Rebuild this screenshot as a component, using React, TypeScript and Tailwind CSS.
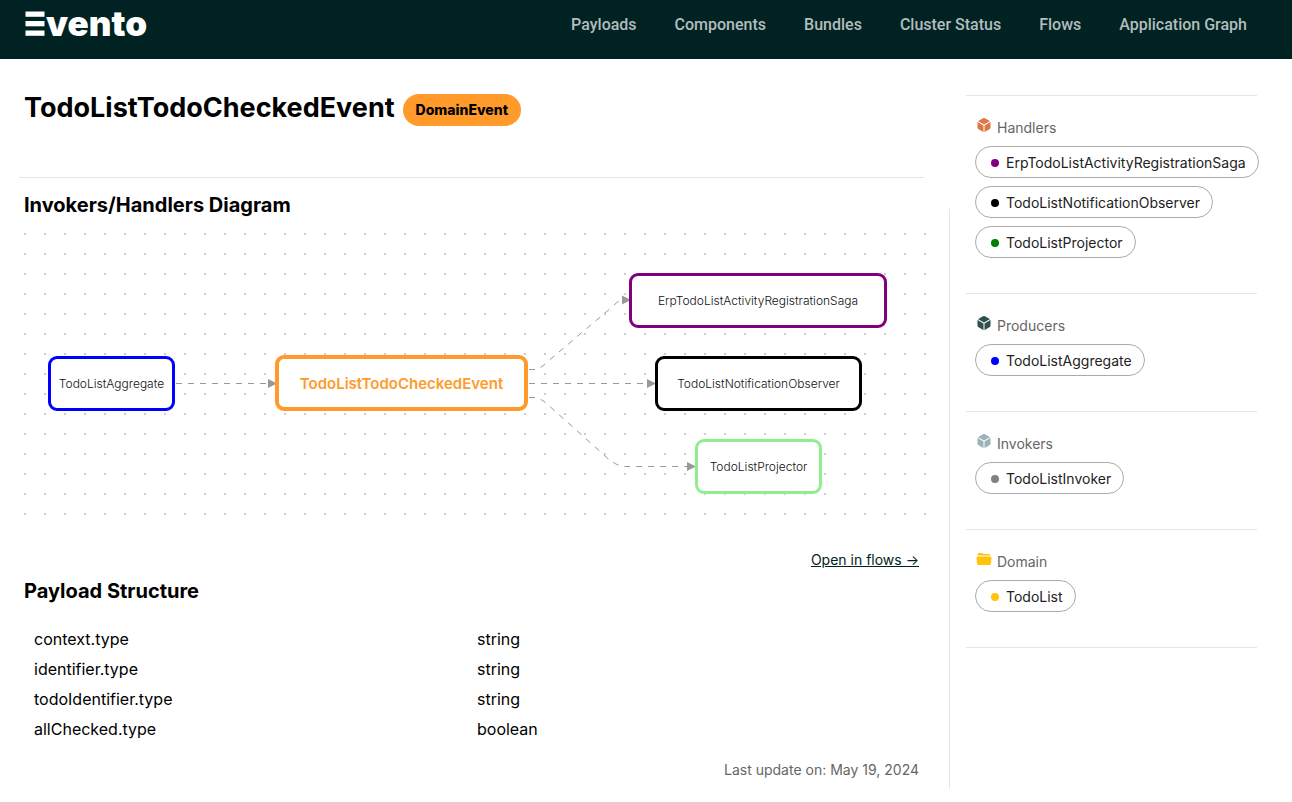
import React from "react";
import { IoCube, IoFolderOpen } from "react-icons/io5";

const navItems = ["Payloads", "Components", "Bundles", "Cluster Status", "Flows", "Application Graph"];

const fields = [
  ["context.type", "string"],
  ["identifier.type", "string"],
  ["todoIdentifier.type", "string"],
  ["allChecked.type", "boolean"],
];

const groups = [
  {
    title: "Handlers",
    icon: <IoCube className="size-4 text-[#e07845]" />,
    items: [
      { name: "ErpTodoListActivityRegistrationSaga", dot: "bg-[#800080]" },
      { name: "TodoListNotificationObserver", dot: "bg-black" },
      { name: "TodoListProjector", dot: "bg-[#008000]" },
    ],
  },
  {
    title: "Producers",
    icon: <IoCube className="size-4 text-[#2f4f4f]" />,
    items: [{ name: "TodoListAggregate", dot: "bg-[#0000ff]" }],
  },
  {
    title: "Invokers",
    icon: <IoCube className="size-4 text-[#98b4b4]" />,
    items: [{ name: "TodoListInvoker", dot: "bg-[#808080]" }],
  },
  {
    title: "Domain",
    icon: <IoFolderOpen className="size-4 text-[#ffc409]" />,
    items: [{ name: "TodoList", dot: "bg-[#ffc409]" }],
  },
];

const nodes = [
  { name: "TodoListAggregate", style: "left-[24px] top-[123px] h-[55px] w-[127px] border-[3px] border-[#0000ff] text-xs font-light text-[#111]" },
  { name: "TodoListTodoCheckedEvent", style: "left-[251px] top-[122px] h-[56px] w-[253px] border-4 border-[#ff9a2b] pt-[2px] text-[15px] font-semibold text-[#ff9a2b]" },
  { name: "ErpTodoListActivityRegistrationSaga", style: "left-[605px] top-[40px] h-[55px] w-[258px] border-[3px] border-[#800080] text-xs font-light text-[#111]" },
  { name: "TodoListNotificationObserver", style: "left-[631px] top-[123px] h-[55px] w-[207px] border-[3px] border-black text-xs font-light text-[#111]" },
  { name: "TodoListProjector", style: "left-[671px] top-[206px] h-[55px] w-[127px] border-[3px] border-[#90ee90] text-xs font-light text-[#111]" },
];

function Logo() {
  return (
    <a href="#" aria-label="Evento" className="flex items-center">
      <svg width="140" height="46" viewBox="0 0 140 46" fill="#fff">
        <rect x="1.5" y="11.500" width="19" height="5.3" />
        <rect x="1.5" y="21" width="19" height="5.3" />
        <rect x="1.5" y="30.500" width="19" height="5.3" />
        <text x="22" y="36" fontFamily="Inter, sans-serif" fontWeight="900" fontSize="35">vento</text>
      </svg>
    </a>
  );
}

function Diagram() {
  return (
    <div className="relative mr-[21px] h-[283px] overflow-hidden">
      <svg className="absolute inset-0 size-full" aria-hidden="true">
        <defs>
          <pattern id="grid" width="20" height="20" patternUnits="userSpaceOnUse">
            <rect width="2" height="2" fill="#ccc" />
          </pattern>
        </defs>
        <rect width="100%" height="100%" fill="url(#grid)" />
        <g fill="none" stroke="#999" strokeDasharray="6 6">
          <path d="M152 150.500H244" />
          <path d="M505 150.500H624" />
          <path d="M505 136.500H511Q516 136 522 130L588 74Q594 67.500 598 67.500" />
          <path d="M505 164.500H511Q516 165 522 170L580 222Q592 233.500 601 233.500H664" />
        </g>
        <g fill="#999">
          <path d="M244 146v9l9-4.500z" />
          <path d="M623 146v9l9-4.500z" />
          <path d="M598 62.500v9l9-4.500z" />
          <path d="M663 229v9l9-4.500z" />
        </g>
      </svg>
      {nodes.map((n) => (
        <div key={n.name} className={`absolute flex items-center justify-center rounded-[9px] bg-white ${n.style}`}>
          {n.name}
        </div>
      ))}
    </div>
  );
}

export default function App() {
  return (
    <div className="min-h-screen bg-white font-['Inter',sans-serif] text-black [font-optical-sizing:none]">
      <header className="flex h-[59px] items-start justify-between bg-[#002222] pr-[45px] pl-6">
        <Logo />
        <nav className="flex gap-[38px] pt-[13px] font-['Roboto',sans-serif] text-base font-medium text-[#b2bdbd]">
          {navItems.map((n) => (
            <a key={n} href="#">{n}</a>
          ))}
        </nav>
      </header>
      <div className="flex">
        <main className="min-w-0 flex-1 pl-6">
          <div className="flex h-[118px] items-start gap-2 pt-[30px]">
            <h1 className="text-[27px] leading-[38px] font-bold">TodoListTodoCheckedEvent</h1>
            <span className="mt-[5px] flex h-8 items-center rounded-full bg-[#ff9a2b] px-[13px] text-sm font-extrabold">DomainEvent</span>
          </div>
          <hr className="mr-[25px] -ml-[5px] border-[#e5e5e5]" />
          <h2 className="pt-3 pb-[13px] text-xl leading-[30px] font-bold">Invokers/Handlers Diagram</h2>
          <Diagram />
          <div className="mr-[30px] pt-[34px] text-right text-sm leading-5">
            <a href="#" className="text-[#002222] underline">Open in flows →</a>
          </div>
          <h2 className="pt-[6px] pb-[18px] text-xl leading-[30px] font-bold">Payload Structure</h2>
          <div className="mr-[39px]">
            <table className="w-full table-fixed text-base">
              <tbody>
                {fields.map(([name, type]) => (
                  <tr key={name} className="h-[30px]">
                    <td className="px-[10px]">{name}</td>
                    <td className="px-[10px]">{type}</td>
                  </tr>
                ))}
              </tbody>
            </table>
          </div>
          <p className="mr-[30px] pt-4 pb-[9px] text-right text-sm leading-5 text-[#666]">Last update on: May 19, 2024</p>
        </main>
        <div className="mt-[150px] w-px bg-[#e5e5e5]" />
        <aside className="w-[342px] shrink-0 pt-9 pr-[35px] pl-4">
          {groups.map((g) => (
            <section key={g.title} className="border-t border-[#e5e5e5] pt-[21px] pb-[35px] pl-[9px]">
              <h3 className="flex h-[29px] items-start gap-[5px] pl-px text-sm leading-[22px] text-[#666]">
                {g.icon}
                <span>{g.title}</span>
              </h3>
              <ul className="flex flex-col items-start gap-2">
                {g.items.map((i) => (
                  <li key={i.name}>
                    <a href="#" className="flex h-8 items-center gap-[7px] rounded-full border border-[#aaa] pt-px pr-3 pl-[15px] text-sm text-[#222]">
                      <span className={`size-2 rounded-full ${i.dot}`} />
                      {i.name}
                    </a>
                  </li>
                ))}
              </ul>
            </section>
          ))}
          <hr className="border-[#e5e5e5]" />
        </aside>
      </div>
    </div>
  );
}
